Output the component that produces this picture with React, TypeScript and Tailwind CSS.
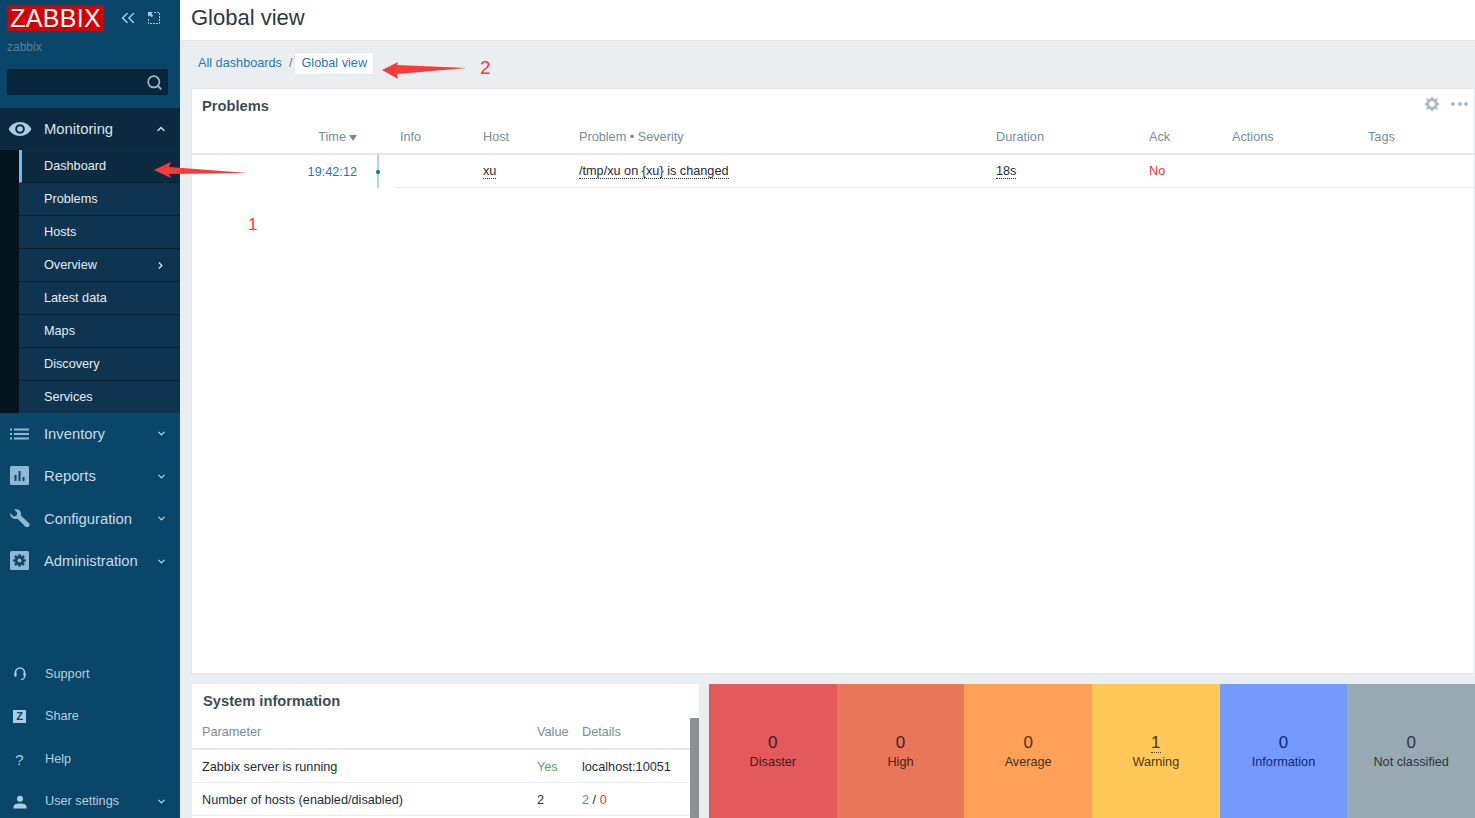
import React from "react";
import { ChevronUp, ChevronDown, ChevronRight, ChevronsLeft, Search } from "lucide-react";

const Eye = () => (
  <svg width="24" height="16" viewBox="0 0 24 16" className="shrink-0">
    <path fillRule="evenodd" fill="#a9cde3" d="M12 1C6.8 1 2.6 4 .6 8c2 4 6.2 7 11.4 7s9.4-3 11.4-7c-2-4-6.2-7-11.4-7zm0 2.200a4.800 4.800 0 1 1 0 9.600 4.800 4.800 0 0 1 0-9.600z" />
    <circle cx="12" cy="8" r="2.800" fill="#a9cde3" />
  </svg>
);
const ListIcon = () => (
  <svg width="20" height="12" viewBox="0 0 20 12" fill="#8fb9d3">
    <rect x="0" y="0.5" width="2" height="2" /><rect x="0" y="5" width="2" height="2" /><rect x="0" y="9.5" width="2" height="2" />
    <rect x="4" y="0.5" width="15" height="2" /><rect x="4" y="5" width="15" height="2" /><rect x="4" y="9.5" width="15" height="2" />
  </svg>
);
const BarsIcon = () => (
  <svg width="20" height="20" viewBox="0 0 20 20">
    <rect width="19" height="19" rx="1.500" fill="#8fb9d3" />
    <rect x="4.500" y="9" width="2" height="6" fill="#0a466a" /><rect x="8.500" y="5" width="2" height="10" fill="#0a466a" /><rect x="12.500" y="11" width="2" height="4" fill="#0a466a" />
  </svg>
);
const Wrench = () => (
  <svg width="20" height="20" viewBox="0 0 20 20" fill="#8fb9d3">
    <path d="M.3 4.300 3.700 7.500l2.800-.8.9-2.900L4.100.6C6.800-.6 10 .6 10.800 3.300c.4 1.200.3 2.200 0 3.100l8 7.600c1 1 1 2.500.1 3.500-1 1-2.600 1-3.600 0L7.600 9.700c-1.300.5-2.500.4-3.700 0C1.300 8.700-.2 6.800.3 4.300z" />
  </svg>
);
const AdminIcon = () => (
  <svg width="20" height="20" viewBox="0 0 20 20">
    <rect width="19" height="19" rx="1.500" fill="#8fb9d3" />
    <circle cx="9.500" cy="9.500" r="4.600" fill="#0a466a" />
    <path stroke="#0a466a" strokeWidth="2.600" d="M9.500 3.200v12.600M3.200 9.500h12.600M5 5l9 9M14 5l-9 9" />
    <circle cx="9.500" cy="9.500" r="2" fill="#8fb9d3" />
  </svg>
);
const Headset = () => (
  <svg width="12" height="14" viewBox="0 0 12 14" fill="none" stroke="#a9cde3" strokeWidth="1.600">
    <path d="M1.500 7V5.500a4.500 4.500 0 0 1 9 0V7" />
    <rect x="0.300" y="5.800" width="2.200" height="4" rx="0.800" fill="#a9cde3" stroke="none" />
    <rect x="9.500" y="5.800" width="2.200" height="4" rx="0.800" fill="#a9cde3" stroke="none" />
    <path d="M10.500 9.500c0 2-1.500 3-3.500 3" strokeWidth="1.200" />
  </svg>
);
const UserIcon = () => (
  <svg width="14" height="14" viewBox="0 0 14 14" fill="#a9cde3">
    <circle cx="7" cy="3.800" r="3" />
    <path d="M.5 13.500v-1.800c0-2 2.500-3.200 6.500-3.200s6.500 1.200 6.500 3.200v1.800z" />
  </svg>
);
const Gear = () => (
  <svg width="16" height="16" viewBox="0 0 16 16" className="shrink-0">
    <circle cx="8" cy="8" r="4.300" fill="none" stroke="#acbbc7" strokeWidth="3" />
    <path stroke="#acbbc7" strokeWidth="2.400" d="M8 1v3M8 12v3M1 8h3M12 8h3M3 3l2.200 2.200M10.800 10.800 13 13M13 3l-2.200 2.200M5.200 10.800 3 13" />
  </svg>
);
const Arrow = ({ className, w, d }: { className: string; w: number; d: string }) => (
  <svg width={w} height="18" viewBox={`0 0 ${w} 18`} className={className}>
    <path fill="#f93a3a" d={d} />
  </svg>
);

const sub = ["Dashboard", "Problems", "Hosts", "Overview", "Latest data", "Maps", "Discovery", "Services"];
const main = [
  { label: "Inventory", icon: <ListIcon /> },
  { label: "Reports", icon: <BarsIcon /> },
  { label: "Configuration", icon: <Wrench /> },
  { label: "Administration", icon: <AdminIcon /> },
];
const bottom = [
  { label: "Support", icon: <span className="ml-[1px]"><Headset /></span>, chev: false },
  {
    label: "Share",
    icon: <span className="w-[13px] h-[13px] bg-[#a9cde3] text-[#0a466a] text-[11px] leading-[13px] font-bold text-center">Z</span>,
    chev: false,
  },
  { label: "Help", icon: <span className="w-[13px] text-center text-[15px] leading-none text-[#a9cde3]">?</span>, chev: false },
  { label: "User settings", icon: <UserIcon />, chev: true },
];
const sev = [
  { n: "0", l: "Disaster", c: "bg-[#e45959]", t: "text-[#3c1e1e]" },
  { n: "0", l: "High", c: "bg-[#e97659]", t: "text-[#3f2419]" },
  { n: "0", l: "Average", c: "bg-[#ffa059]", t: "text-[#4a3018]" },
  { n: "1", l: "Warning", c: "bg-[#ffc859]", t: "text-[#4a3a18]", u: true },
  { n: "0", l: "Information", c: "bg-[#7499ff]", t: "text-[#10296e]" },
  { n: "0", l: "Not classified", c: "bg-[#97aab3]", t: "text-[#2c363b]" },
];

export default function App() {
  return (
    <div className="relative flex h-[818px] w-[1475px] overflow-hidden bg-[#ebeef0] text-[12.7px] text-[#1f2c33] font-['Liberation_Sans',Arial,sans-serif]">
      <aside className="flex w-[180px] shrink-0 flex-col bg-[#0a466a]">
        <div className="flex h-[108px] shrink-0 flex-col pl-[7px]">
          <div className="mt-[5px] flex items-center">
            <div className="flex h-[26px] w-[97px] items-center justify-center bg-[#d40000] text-[25px] leading-none tracking-[0.3px] text-white">ZABBIX</div>
            <ChevronsLeft className="ml-[13px] text-[#a9cde3]" size={22} strokeWidth={1.600} />
            <svg width="14" height="14" viewBox="0 0 14 14" className="ml-[8px]" fill="none" stroke="#a9cde3">
              <path strokeDasharray="2 1" d="M7 1.500h5.500v11h-11V7" />
              <path fill="#a9cde3" stroke="none" d="M1 1h5L4.300 2.700l2 2-1.600 1.600-2-2L1 6z" />
            </svg>
          </div>
          <div className="mt-[8px] text-[12px] leading-[16px] text-[#5b8199]">zabbix</div>
          <div className="mt-[14px] flex h-[26px] w-[161px] items-center justify-end rounded-[2px] border border-[#062135] bg-[#08263b] pr-[4px]">
            <Search size={17} className="text-[#9fbccd]" strokeWidth={2.400} />
          </div>
        </div>
        <div className="flex h-[42px] shrink-0 items-center bg-[#0b2a3f] pl-[8px] pr-[13px]">
          <Eye />
          <span className="ml-[12px] flex-1 text-[14.8px] text-[#dbe7ee]">Monitoring</span>
          <ChevronUp size={12} strokeWidth={2.500} className="text-[#dbe7ee]" />
        </div>
        <div className="flex shrink-0 bg-[#04141e]">
          <div className="ml-[19px] flex-1">
            {sub.map((s, i) => (
              <div
                key={s}
                className={`flex items-center border-b border-[#071f30] pr-[14px] ${
                  i === 0 ? "border-l-[3px] border-l-[#73bbf0] bg-[#0d2b40] pl-[22px]" : "bg-[#0e3450] pl-[25px]"
                } ${i === 7 ? "h-[32px] border-b-0" : "h-[33px]"}`}
              >
                <span className="mt-[2px] flex-1 text-[#e6edf2]">{s}</span>
                {s === "Overview" && <ChevronRight size={11} strokeWidth={2.500} className="text-[#dfe8ee]" />}
              </div>
            ))}
          </div>
        </div>
        <div className="flex flex-col">
          {main.map((m) => (
            <div key={m.label} className="flex h-[42.500px] items-center pb-[1px] pl-[10px] pr-[13px]">
              <span className="flex w-[34px] shrink-0 items-center">{m.icon}</span>
              <span className="flex-1 text-[14.8px] text-[#c9dbe6]">{m.label}</span>
              <ChevronDown size={11} strokeWidth={2.500} className="text-[#c9dbe6]" />
            </div>
          ))}
        </div>
        <div className="-mb-[5px] mt-auto flex flex-col">
          {bottom.map((m) => (
            <div key={m.label} className="flex h-[42.500px] items-center pl-[13px] pr-[13px]">
              <span className="flex w-[32px] shrink-0 items-center">{m.icon}</span>
              <span className="flex-1 text-[12.7px] text-[#b7cfdd]">{m.label}</span>
              {m.chev && <ChevronDown size={11} strokeWidth={2.500} className="text-[#c9dbe6]" />}
            </div>
          ))}
        </div>
      </aside>

      <main className="flex min-w-0 flex-1 flex-col">
        <header className="flex h-[41px] shrink-0 items-center border-b border-[#e3e6e8] bg-white pb-[5px] pl-[11px]">
          <h1 className="text-[22px] font-normal leading-none text-[#2b3a42]">Global view</h1>
        </header>
        <nav className="flex h-[47px] shrink-0 items-start pl-[18px] pt-[11px] text-[#1f77b4]">
          <span className="mt-[2px]">All dashboards</span>
          <span className="ml-[7px] mr-[2px] mt-[2px] text-[#68757d]">/</span>
          <span className="flex h-[23px] items-center border border-[#e4e7e9] bg-white px-[6px]">Global view</span>
        </nav>
        <section className="ml-[11px] flex h-[586px] shrink-0 flex-col border border-[#e3e6e8] bg-white">
          <div className="flex h-[34px] shrink-0 items-center justify-between pl-[10px] pr-[6px]">
            <h2 className="mt-[1px] text-[14.700px] font-bold text-[#3e4d55]">Problems</h2>
            <div className="mb-[5px] flex items-center gap-[11px]">
              <Gear />
              <span className="flex gap-[2.500px]">
                <i className="h-[4px] w-[4px] rounded-full bg-[#acbbc7]" />
                <i className="h-[4px] w-[4px] rounded-full bg-[#acbbc7]" />
                <i className="h-[4px] w-[4px] rounded-full bg-[#acbbc7]" />
              </span>
            </div>
          </div>
          <div className="flex h-[32px] shrink-0 items-center border-b-2 border-[#e3e6e8] text-[#768d99]">
            <span className="flex w-[165px] items-center justify-end gap-[3px]">
              Time
              <svg width="8" height="6" viewBox="0 0 8 6"><path d="M0 0h8L4 6z" fill="#768d99" /></svg>
            </span>
            <span className="ml-[43px] w-[83px]">Info</span>
            <span className="w-[96px]">Host</span>
            <span className="w-[417px]">Problem • Severity</span>
            <span className="w-[153px]">Duration</span>
            <span className="w-[83px]">Ack</span>
            <span className="w-[136px]">Actions</span>
            <span>Tags</span>
          </div>
          <div className="flex h-[33px] shrink-0 items-stretch">
            <span className="flex w-[165px] items-center justify-end pt-[2px] text-[#1f77b4]">19:42:12</span>
            <span className="relative ml-[20px] w-[2px] bg-[#a9d5f0]">
              <i className="absolute left-[-1px] top-[15px] h-[4px] w-[4px] rounded-full bg-[#0275b8]" />
            </span>
            <div className="ml-[16px] flex flex-1 items-center border-b border-[#ebeef0] pt-[2px]">
              <span className="ml-[4px] w-[84px]" />
              <span className="w-[96px]"><span className="border-b border-dotted border-[#1f2c33]">xu</span></span>
              <span className="w-[417px]"><span className="border-b border-dotted border-[#1f2c33]">/tmp/xu on {"{xu}"} is changed</span></span>
              <span className="w-[153px]"><span className="border-b border-dotted border-[#1f2c33]">18s</span></span>
              <span className="text-[#e33734]">No</span>
            </div>
          </div>
        </section>
        <div className="mt-[10px] flex min-h-0 flex-1 pl-[12px]">
          <section className="relative flex w-[507px] shrink-0 flex-col bg-white">
            <h2 className="flex h-[34px] shrink-0 items-center pl-[11px] text-[14.700px] font-bold text-[#3e4d55]">System information</h2>
            <div className="flex h-[32px] shrink-0 items-center border-b-2 border-[#e3e6e8] pl-[10px] text-[#768d99]">
              <span className="w-[335px]">Parameter</span>
              <span className="w-[45px]">Value</span>
              <span>Details</span>
            </div>
            <div className="flex h-[33px] shrink-0 items-center border-b border-[#ebeef0] pl-[10px] pt-[3px]">
              <span className="w-[335px]">Zabbix server is running</span>
              <span className="w-[45px] text-[#56a65a]">Yes</span>
              <span>localhost:10051</span>
            </div>
            <div className="flex h-[33px] shrink-0 items-center border-b border-[#ebeef0] pl-[10px] pt-[3px]">
              <span className="w-[335px]">Number of hosts (enabled/disabled)</span>
              <span className="w-[45px]">2</span>
              <span><span className="text-[#56a65a]">2</span> / <span className="text-[#e33734]">0</span></span>
            </div>
            <div className="absolute bottom-0 right-0 top-[34px] w-[9px] bg-[#8e9092]" />
          </section>
          <div className="ml-[10px] grid flex-1 grid-cols-6">
            {sev.map((s) => (
              <div key={s.l} className={`flex flex-col items-center justify-center pt-[1px] ${s.c} ${s.t}`}>
                <span className={`text-[17px] leading-[18px] ${s.u ? "border-b border-dotted border-[#4a3a18]" : ""}`}>{s.n}</span>
                <span className={`text-[12.7px] leading-[16px] ${s.u ? "mt-[1px]" : "mt-[2px]"}`}>{s.l}</span>
              </div>
            ))}
          </div>
        </div>
      </main>

      <Arrow w={95} d="M0 8 L17 0 L15 5 L94 11 L15 12 L17 16 Z" className="absolute left-[154px] top-[162px]" />
      <Arrow w={86} d="M0 8 L16 0 L15 3 L85 6 L15 12 L16 17 Z" className="absolute left-[382px] top-[62px]" />
      <span className="absolute left-[248px] top-[215px] text-[17px] leading-[20px] text-[#f93a3a]">1</span>
      <span className="absolute left-[480px] top-[58px] text-[19px] leading-[20px] text-[#f93a3a]">2</span>
    </div>
  );
}
